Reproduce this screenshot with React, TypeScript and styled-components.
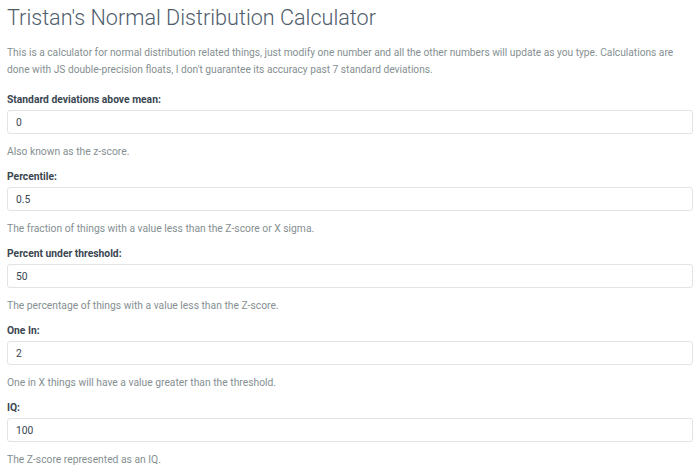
import styled, { createGlobalStyle } from "styled-components";

const fields = [
  { label: "Standard deviations above mean:", value: "0", help: "Also known as the z-score." },
  { label: "Percentile:", value: "0.5", help: "The fraction of things with a value less than the Z-score or X sigma." },
  { label: "Percent under threshold:", value: "50", help: "The percentage of things with a value less than the Z-score." },
  { label: "One In:", value: "2", help: "One in X things will have a value greater than the threshold." },
  { label: "IQ:", value: "100", help: "The Z-score represented as an IQ." },
];

const GlobalStyle = createGlobalStyle`
  body {
    margin: 0;
    background: #fff;
    font-family: Roboto, "Helvetica Neue", Arial, sans-serif;
    font-size: 10.3px;
    color: #7b8a8b;
  }
  * { box-sizing: border-box; }
`;

export default function App() {
  return (
    <>
      <GlobalStyle />
      <Page>
        <Title>Tristan's Normal Distribution Calculator</Title>
        <Intro>
          This is a calculator for normal distribution related things, just modify one number and all the other
          numbers will update as you type. Calculations are done with JS double-precision floats, I don't guarantee
          its accuracy past 7 standard deviations.
        </Intro>
        {fields.map((f) => (
          <Group key={f.label}>
            <Label>{f.label}</Label>
            <Input type="text" defaultValue={f.value} />
            <Help>{f.help}</Help>
          </Group>
        ))}
      </Page>
    </>
  );
}

const Page = styled.div`
  padding: 5px 7px 0;
`;

const Title = styled.h1`
  margin: 0;
  font-size: 21.6px;
  font-weight: 300;
  line-height: 26px;
  color: #4e5d6c;
`;

const Intro = styled.p`
  margin: 13px 0 14px;
  font-size: 10.2px;
  line-height: 17px;
  color: #858f91;
`;

const Group = styled.div`
  display: flex;
  flex-direction: column;
`;

const Label = styled.label`
  font-weight: 700;
  line-height: 15px;
  color: #3a4651;
`;

const Input = styled.input`
  width: 100%;
  height: 24px;
  margin-top: 3px;
  padding: 0 8px;
  border: 1px solid #e3e3e3;
  border-radius: 3px;
  font-family: inherit;
  font-size: 10.3px;
  color: #3a4651;
  background: #fff;
  outline: none;
`;

const Help = styled.p`
  margin: 10px 0;
  line-height: 15px;
  color: #858f91;
`;
